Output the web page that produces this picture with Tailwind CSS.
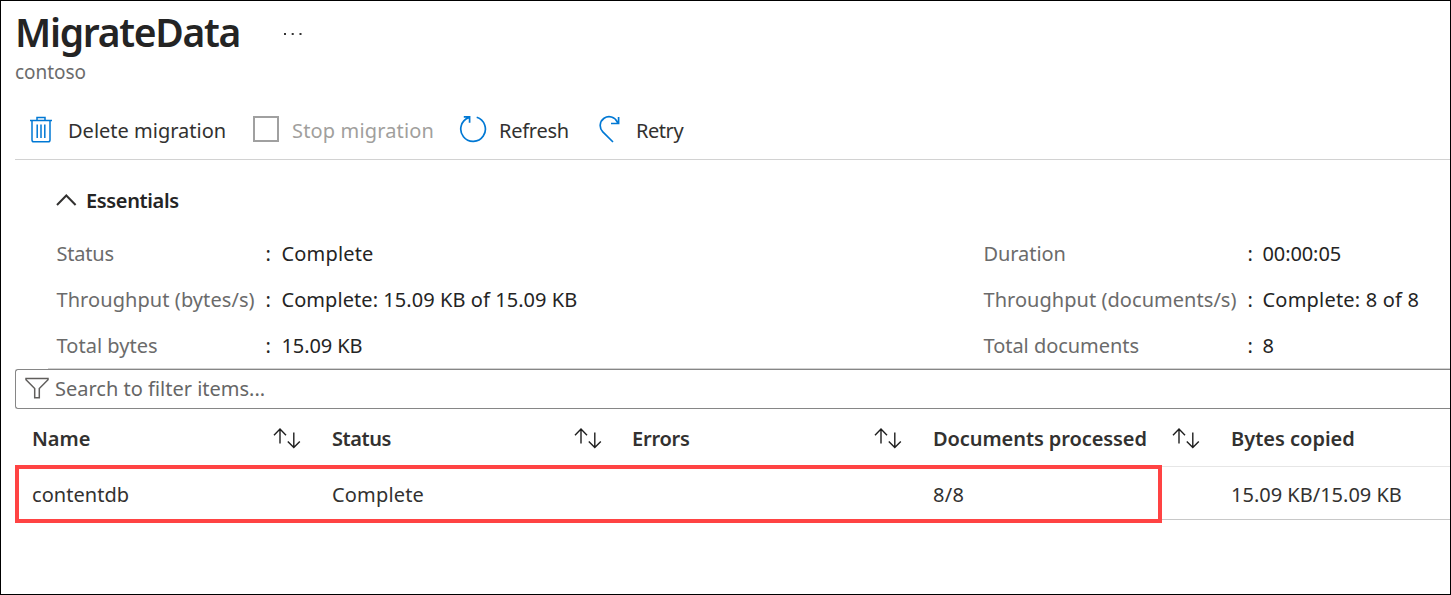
<!DOCTYPE html>
<html lang="en">
<head>
<meta charset="utf-8">
<title>MigrateData</title>
<script src="https://cdn.jsdelivr.net/npm/@tailwindcss/browser@4"></script>
</head>
<body class="bg-white">
<svg class="hidden">
  <symbol id="sort" viewBox="0 0 28 22">
    <path d="M7 16.6V2M1 8.2l6-6.2 6 6.2M20.8 5.5V20.4M14.8 14.4l6 6.2 6-6.2" fill="none" stroke="#1f1f1f" stroke-width="1.4"/>
  </symbol>
</svg>
<div class="relative flex h-[595px] w-[1451px] flex-col overflow-hidden border border-black bg-white font-['Noto_Sans','Open_Sans',sans-serif] text-[20px] leading-[30px] whitespace-nowrap text-[#323130]">
  <!-- Title -->
  <header class="pl-[14px]">
    <div class="flex h-[60px] items-center">
      <h1 class="w-[268px] pt-[2px] text-[39px] leading-[60px] font-semibold tracking-[-1.3px] text-[#242424]">MigrateData</h1>
      <svg class="mt-[5px]" width="20" height="4" fill="#333"><rect x="1" y="1" width="2" height="2"/><rect x="8.7" y="1" width="2" height="2"/><rect x="16.5" y="1" width="2" height="2"/></svg>
    </div>
    <p class="h-[22px] text-[19px] leading-[22px] tracking-[-0.05px] text-[#6b6b6b]">contoso</p>
  </header>

  <!-- Commands -->
  <nav class="mt-[18px] ml-[14px] flex h-[59px] items-center border-b border-[#d2d2d2] pl-[15px]">
    <div class="flex w-[223px] items-center">
      <svg class="mr-[16px]" width="22" height="28" viewBox="0 0 22 28" fill="none" stroke="#0078d4" stroke-width="1.5"><path d="M0 4.500h22M7 4.500V1.600h8v2.900M2 4.500V24q0 1.800 1.800 1.800h14.400q1.800 0 1.800-1.800V4.500M7.200 8.500v13.500M11 8.500v13.500M14.800 8.500v13.500"/></svg>
      <span class="pt-[2px]">Delete migration</span>
    </div>
    <div class="flex w-[206px] items-center text-[#a19f9d]">
      <span class="mr-[13px] mb-[2px] size-[26px] border-2 border-[#a0a0a0]"></span>
      <span class="pt-[2px] tracking-[0.15px]">Stop migration</span>
    </div>
    <div class="flex w-[139px] items-center">
      <svg class="mr-[12px] mb-[2px]" width="28" height="28" viewBox="0 0 28 28" fill="none" stroke="#0078d4" stroke-width="1.7"><path d="M17.700 2.300A12.300 12.300 0 1 1 9.600 2.600M4.800 1.900h5.800v5.800"/></svg>
      <span class="pt-[2px] tracking-[-0.25px]">Refresh</span>
    </div>
    <div class="flex items-center">
      <svg class="mr-[16px] mb-[2px]" width="22" height="28" viewBox="0 0 22 28" fill="none" stroke="#0078d4" stroke-width="1.7"><path d="M15 27L4.800 16.800A8.900 8.900 0 1 1 19.200 6.800L20 8.300M13 8.500h7.600V2"/></svg>
      <span class="pt-[2px] tracking-[-0.45px]">Retry</span>
    </div>
  </nav>

  <!-- Essentials -->
  <section class="pl-[55px]">
    <h2 class="mt-[10px] flex h-[60px] items-center text-[20px] font-semibold tracking-[-0.36px] text-[#242424]">
      <svg class="mr-[9px]" width="21" height="14" viewBox="0 0 21 14" fill="none" stroke="#323130" stroke-width="2"><path d="M1 12l9.300-9.500L19.600 12"/></svg>
      <span class="pt-[2px]">Essentials</span>
    </h2>
    <div class="grid h-[138px] grid-cols-[927px_1fr] pt-px pl-[0.5px] text-[#242424]">
      <dl class="grid auto-rows-[46px] grid-cols-[209px_16px_1fr] items-center">
        <dt class="tracking-[-0.2px] text-[#6b6b6b]">Status</dt><span>:</span><dd class="tracking-[0.16px]">Complete</dd>
        <dt class="tracking-[0.07px] text-[#6b6b6b]">Throughput (bytes/s)</dt><span>:</span><dd class="tracking-[0.06px]">Complete: 15.09 KB of 15.09 KB</dd>
        <dt class="tracking-[0.03px] text-[#6b6b6b]">Total bytes</dt><span>:</span><dd class="tracking-[-0.1px]">15.09 KB</dd>
      </dl>
      <dl class="grid auto-rows-[46px] grid-cols-[264px_15px_1fr] items-center">
        <dt class="tracking-[-0.07px] text-[#6b6b6b]">Duration</dt><span>:</span><dd class="tracking-[-0.1px]">00:00:05</dd>
        <dt class="tracking-[0.04px] text-[#6b6b6b]">Throughput (documents/s)</dt><span>:</span><dd class="tracking-[0.2px]">Complete: 8 of 8</dd>
        <dt class="tracking-[-0.04px] text-[#6b6b6b]">Total documents</dt><span>:</span><dd>8</dd>
      </dl>
    </div>
  </section>
  <div class="ml-[47px] h-px shrink-0 bg-[#d2d2d2]"></div>

  <!-- Filter -->
  <div class="ml-[14px] flex h-[40px] shrink-0 items-center rounded-l-[3px] border border-r-0 border-[#868686] pl-[9px] text-[#666]">
    <svg class="mr-[6px] -mt-[2px]" width="24" height="22" viewBox="0 0 24 22" fill="none" stroke="#605e5c" stroke-width="1.500"><path d="M1 1.500h22v1.300L14.300 11.500v9.200H9.700v-9.200L1 2.800z"/></svg>
    <span>Search to filter items...</span>
  </div>

  <!-- Items -->
  <div class="ml-[14px] grid h-[58px] shrink-0 grid-cols-[300px_300px_301px_298px_1fr] items-center border-b border-[#e6e6e6] pl-[17px] font-semibold text-[#323130]">
    <div class="flex items-center"><span class="w-[241px] pt-[2px]">Name</span><svg width="28" height="22"><use href="#sort"/></svg></div>
    <div class="flex items-center"><span class="w-[242px] pt-[2px] tracking-[-0.44px]">Status</span><svg width="28" height="22"><use href="#sort"/></svg></div>
    <div class="flex items-center"><span class="w-[242px] pt-[2px] tracking-[-0.23px]">Errors</span><svg width="28" height="22"><use href="#sort"/></svg></div>
    <div class="flex items-center"><span class="w-[239px] pt-[2px] tracking-[-0.08px]">Documents processed</span><svg width="28" height="22"><use href="#sort"/></svg></div>
    <span class="pt-[2px]">Bytes copied</span>
  </div>
  <div class="ml-[14px] grid h-[53px] shrink-0 grid-cols-[300px_300px_301px_298px_1fr] items-center border-b border-[#c8c8c8] pt-[4px] pl-[17px]">
    <span class="tracking-[0.05px]">contentdb</span>
    <span class="tracking-[0.16px]">Complete</span>
    <span></span>
    <span class="tracking-[0.31px]">8/8</span>
    <span>15.09 KB/15.09 KB</span>
  </div>

  <!-- Row highlight -->
  <div class="absolute top-[464px] left-[14px] h-[58px] w-[1147px] border-4 border-[#ff4343]"></div>
</div>
</body>
</html>
